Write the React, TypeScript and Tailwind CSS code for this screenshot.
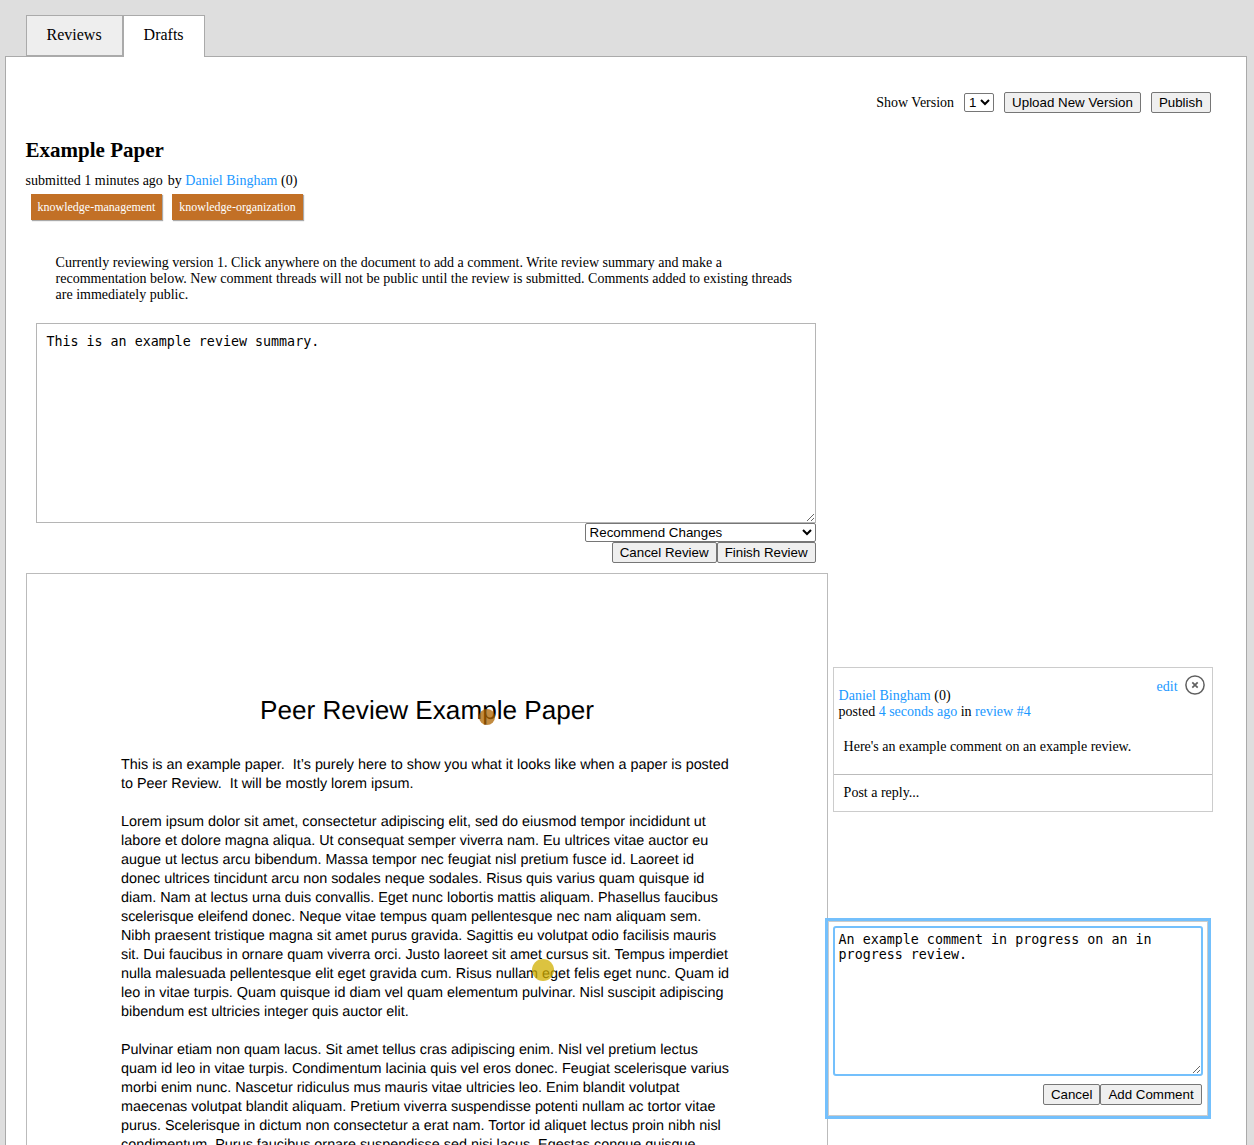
import React from 'react';

const TITLE = 'Peer Review Example Paper';

const PARAGRAPHS: string[][] = [
  [
    'This is an example paper.\u00a0 It’s purely here to show you what it looks like when a paper is posted',
    'to Peer Review.\u00a0 It will be mostly lorem ipsum.',
  ],
  [
    'Lorem ipsum dolor sit amet, consectetur adipiscing elit, sed do eiusmod tempor incididunt ut',
    'labore et dolore magna aliqua. Ut consequat semper viverra nam. Eu ultrices vitae auctor eu',
    'augue ut lectus arcu bibendum. Massa tempor nec feugiat nisl pretium fusce id. Laoreet id',
    'donec ultrices tincidunt arcu non sodales neque sodales. Risus quis varius quam quisque id',
    'diam. Nam at lectus urna duis convallis. Eget nunc lobortis mattis aliquam. Phasellus faucibus',
    'scelerisque eleifend donec. Neque vitae tempus quam pellentesque nec nam aliquam sem.',
    'Nibh praesent tristique magna sit amet purus gravida. Sagittis eu volutpat odio facilisis mauris',
    'sit. Dui faucibus in ornare quam viverra orci. Justo laoreet sit amet cursus sit. Tempus imperdiet',
    'nulla malesuada pellentesque elit eget gravida cum. Risus nullam eget felis eget nunc. Quam id',
    'leo in vitae turpis. Quam quisque id diam vel quam elementum pulvinar. Nisl suscipit adipiscing',
    'bibendum est ultricies integer quis auctor elit.',
  ],
  [
    'Pulvinar etiam non quam lacus. Sit amet tellus cras adipiscing enim. Nisl vel pretium lectus',
    'quam id leo in vitae turpis. Condimentum lacinia quis vel eros donec. Feugiat scelerisque varius',
    'morbi enim nunc. Nascetur ridiculus mus mauris vitae ultricies leo. Enim blandit volutpat',
    'maecenas volutpat blandit aliquam. Pretium viverra suspendisse potenti nullam ac tortor vitae',
    'purus. Scelerisque in dictum non consectetur a erat nam. Tortor id aliquet lectus proin nibh nisl',
    'condimentum. Purus faucibus ornare suspendisse sed nisi lacus. Egestas congue quisque',
  ],
];

function Button({ children }: { children: React.ReactNode }) {
  return (
    <button className="h-[21px] shrink-0 rounded-[2px] border border-[#767676] bg-[#efefef] px-[7px] font-['Liberation_Sans',Arial,sans-serif] text-[13.333px] leading-[15px] whitespace-nowrap text-black">
      {children}
    </button>
  );
}

function Link({ children }: { children: React.ReactNode }) {
  return <a className="text-[#1a98ff]">{children}</a>;
}

function Tag({ children }: { children: React.ReactNode }) {
  return (
    <span className="flex h-[26px] w-[131px] items-center justify-center bg-[#c27026] text-[12px] whitespace-nowrap text-white shadow-[1px_1px_1px_#aaa]">
      {children}
    </span>
  );
}

function Header() {
  return (
    <header>
      <h1 className="text-[21px] leading-6 font-bold">Example Paper</h1>
      <div className="mt-[11px] flex gap-[5px] leading-4">
        <span>submitted 1 minutes ago</span>
        <span>
          by <Link>Daniel Bingham</Link> (0)
        </span>
      </div>
      <div className="mt-[5px] ml-[5.4px] flex gap-[10px]">
        <Tag>knowledge-management</Tag>
        <Tag>knowledge-organization</Tag>
      </div>
    </header>
  );
}

function ReviewForm() {
  return (
    <section className="ml-[10px] w-[780px]">
      <p className="mt-[35px] ml-[20px] w-[740px] leading-4">
        Currently reviewing version 1. Click anywhere on the document to add a comment. Write review summary and make a
        recommentation below. New comment threads will not be public until the review is submitted. Comments added to
        existing threads are immediately public.
      </p>
      <textarea
        className="mt-[20px] block h-[200px] w-[780px] border border-[#b5b5b5] px-[9.8px] py-[10px] font-['DejaVu_Sans_Mono',monospace] text-[13.333px] leading-[normal] text-black"
        defaultValue="This is an example review summary."
      />
      <div className="flex flex-col items-end">
        <select className="h-[19px] w-[231px] rounded-[2px] border border-[#767676] bg-white font-['Liberation_Sans',Arial,sans-serif] text-[13.333px] text-black">
          <option>Recommend Changes</option>
        </select>
        <div className="flex">
          <Button>Cancel Review</Button>
          <Button>Finish Review</Button>
        </div>
      </div>
    </section>
  );
}

function PaperPage() {
  return (
    <article className="relative h-[1040px] w-[802px] shrink-0 border border-[#bbb] pt-[120px] pl-[94.4px] font-['Liberation_Sans',Arial,sans-serif] text-[14.38px] leading-[19px] text-black [text-rendering:geometricPrecision]">
      <h2 className="mr-[93.6px] text-center text-[26.14px] leading-8">{TITLE}</h2>
      <div className="mt-[30px] flex flex-col gap-[19px]">
        {PARAGRAPHS.map((lines) => (
          <p key={lines[0]} className="whitespace-nowrap">
            {lines.map((line) => (
              <span key={line} className="block">
                {line}
              </span>
            ))}
          </p>
        ))}
      </div>
      <span className="absolute top-[135px] left-[452.4px] size-4 rounded-full bg-[#ad6400]/75" />
      <span className="absolute top-[385px] left-[505.4px] size-[22px] rounded-full bg-[#d0af00]/75" />
    </article>
  );
}

function CommentThread() {
  return (
    <section className="mt-[94px] h-[145px] w-[380px] border border-[#ccc]">
      <div className="flex h-[107px] flex-col border-b border-[#bbb] px-[5px]">
        <div className="flex justify-between">
          <div className="mt-5 leading-4">
            <div>
              <Link>Daniel Bingham</Link> (0)
            </div>
            <div>
              posted <Link>4 seconds ago</Link> in <Link>review #4</Link>
            </div>
          </div>
          <div className="mt-[6px] mr-[2px] flex h-5 gap-[7px]">
            <span className="mt-[5px] leading-4">
              <Link>edit</Link>
            </span>
            <svg className="mt-px size-5" viewBox="0 0 20 20" fill="none" stroke="#606060">
              <circle cx="10" cy="10" r="9.1" strokeWidth="1.5" />
              <path d="M7.3 7.3l5.4 5.4M12.7 7.3l-5.4 5.4" strokeWidth="1.7" />
            </svg>
          </div>
        </div>
        <p className="mt-[19px] ml-[5px] leading-4">Here's an example comment on an example review.</p>
      </div>
      <p className="mt-[10px] ml-[10px] leading-4">Post a reply...</p>
    </section>
  );
}

function CommentForm() {
  return (
    <section className="relative mt-[109px] -ml-[5px] h-[195px] w-[380px] border border-[#ccc] bg-white px-[4px] pt-[4px] shadow-[0_0_0_3px_#74c0fc]">
      <textarea
        className="block h-[150px] w-[370px] rounded-[3px] border-2 border-[#74c0fc] px-[4px] py-[4px] font-['DejaVu_Sans_Mono',monospace] text-[13.333px] leading-[15px] text-black outline-none"
        defaultValue="An example comment in progress on an in progress review."
      />
      <div className="mt-2 mr-px flex justify-end">
        <Button>Cancel</Button>
        <Button>Add Comment</Button>
      </div>
    </section>
  );
}

export default function App() {
  return (
    <div className="h-[1145px] overflow-hidden bg-[#dedede] px-[4.6px] pt-[15px] font-['Liberation_Serif','Times_New_Roman',serif] text-[14px] text-black">
      <nav className="relative z-10 ml-[21px] flex text-[16px]">
        <div className="h-[41px] w-[97px] border border-[#aaa] bg-[#eee] pt-[10px] text-center leading-[18px]">Reviews</div>
        <div className="-mb-px h-[42px] w-[82px] border border-b-0 border-[#aaa] bg-white pt-[10px] text-center leading-[18px]">Drafts</div>
      </nav>
      <main className="h-[1200px] w-[1242px] border border-[#aaa] bg-white pt-[35px] pl-[20px]">
        <div className="mr-[35px] flex items-center justify-end gap-[10px]">
          <span>Show Version</span>
          <select className="h-[19px] w-[30px] rounded-[2px] border border-[#767676] bg-white font-['Liberation_Sans',Arial,sans-serif] text-[13.333px] text-black">
            <option>1</option>
          </select>
          <Button>Upload New Version</Button>
          <Button>Publish</Button>
        </div>
        <div className="mt-[25px]">
          <Header />
        </div>
        <ReviewForm />
        <div className="mt-[10px] flex gap-[5px]">
          <PaperPage />
          <div>
            <CommentThread />
            <CommentForm />
          </div>
        </div>
      </main>
    </div>
  );
}
